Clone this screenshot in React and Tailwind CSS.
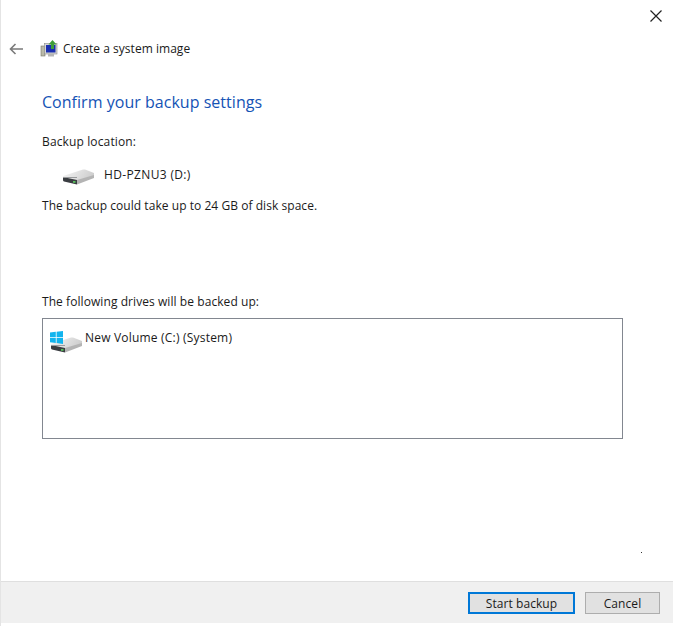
const font = { fontFamily: '"Open Sans", "Noto Sans", sans-serif', letterSpacing: "0.07px" };

function Drive({ className = "", id }) {
  return (
    <svg width="33" height="16" viewBox="0 0 33 16" className={className}>
      <defs>
        <linearGradient id={id} x1="0" y1="0" x2="1" y2="0.3">
          <stop offset="0" stopColor="#f6f6f6" />
          <stop offset="1" stopColor="#cfcfcf" />
        </linearGradient>
      </defs>
      <path d="M1 7 L21 0.5 Q22 0.3 23 0.5 L32 4 L32 8 L15 12 L1 9 Z" fill={`url(#${id})`} />
      <path d="M15 11 L32 6 L32 9 L15 15.5 Z" fill="#b4b4b4" />
      <path d="M1 8 L15 11 L15 15.5 L2 12.5 Q1 12.2 1 11 Z" fill="#3a3d41" />
      <rect x="1" y="8" width="14" height="1" fill="#9a9c9e" />
      <rect x="11" y="12" width="2.5" height="1.8" fill="#58c05c" />
    </svg>
  );
}

function SystemImageIcon() {
  return (
    <svg width="18" height="18" viewBox="0 0 18 18">
      <rect x="1" y="6" width="4" height="10" fill="#b9b9a8" stroke="#77776a" strokeWidth="0.6" />
      <rect x="4.5" y="3.5" width="12.5" height="10.5" fill="#d5d5d5" stroke="#8a8a8a" strokeWidth="0.6" />
      <rect x="6" y="5" width="9.5" height="7.5" fill="#1a2fb0" />
      <rect x="8" y="14" width="6" height="2.5" fill="#b5b5b5" />
      <path d="M11 9 V4.5 H8.5 L12.5 0 L16.5 4.5 H14 V9 Z" fill="#3f9e3a" />
    </svg>
  );
}

function WinLogo({ className = "" }) {
  return (
    <svg width="13" height="13" viewBox="0 0 13 13" className={className}>
      <path d="M0 1.6 L5.8 0.8 V6 H0 Z M6.6 0.7 L13 0 V6 H6.6 Z M0 6.8 H5.8 V12 L0 11.2 Z M6.6 6.8 H13 V13 L6.6 12.1 Z" fill="#12b4ee" />
    </svg>
  );
}

export default function App() {
  return (
    <div style={font} className="relative w-[673px] h-[626px] bg-white flex flex-col text-[12px] leading-[16px] text-[#1a1a1a] border-l border-[#e4e4e4] overflow-hidden">
      <div className="flex justify-end h-[33px] pr-[11px] pt-[10px] shrink-0">
        <svg width="12" height="12" viewBox="0 0 12 12" stroke="#222" strokeWidth="1.2">
          <path d="M0.5 0.5 L11.5 11.5 M11.5 0.5 L0.5 11.5" />
        </svg>
      </div>

      <div className="flex items-center h-[32px] shrink-0">
        <svg width="14" height="12" viewBox="0 0 14 12" className="ml-[8px]" fill="none" stroke="#7a7a7a" strokeWidth="1.6">
          <path d="M14 6 H1.5 M6.5 1 L1.5 6 L6.5 11" />
        </svg>
        <span className="ml-[17px] flex mt-[-1px]"><SystemImageIcon /></span>
        <span className="ml-[5px] tracking-[0.03px]">Create a system image</span>
      </div>

      <main className="flex-1 flex flex-col pl-[41px] pr-[50px]">
        <h1 className="mt-[25px] text-[16px] leading-[24px] font-normal tracking-[0.03px] text-[#1553b5]">Confirm your backup settings</h1>
        <p className="mt-[20px] tracking-[0.13px]">Backup location:</p>
        <div className="mt-[16px] flex items-center h-[18px]">
          <Drive id="d1" className="ml-[20px] mt-[4px]" />
          <span className="ml-[9px] tracking-[0.35px]">HD-PZNU3 (D:)</span>
        </div>
        <p className="mt-[14px] tracking-[0.05px]">The backup could take up to 24 GB of disk space.</p>
        <p className="mt-[80px]">The following drives will be backed up:</p>
        <div className="mt-[8px] h-[121px] border border-[#828790]">
          <div className="flex items-start pl-[7px] pt-[11px]">
            <span className="relative flex mt-[7px]">
              <Drive id="d2" />
              <WinLogo className="absolute left-0 top-[-6px]" />
            </span>
            <span className="ml-[2px] tracking-[0.2px]">New Volume (C:) (System)</span>
          </div>
        </div>
      </main>

      <footer className="h-[42px] mb-[3px] bg-[#f0f0f0] border-t border-[#dfdfdf] flex items-center justify-end gap-[10px] pr-[13px] shrink-0">
        <button className="w-[107px] h-[22px] pt-[2px] bg-[#e1e1e1] border-2 border-[#0078d7]">Start backup</button>
        <button className="w-[75px] h-[22px] pt-[2px] bg-[#e1e1e1] border border-[#adadad]">Cancel</button>
      </footer>

      <span className="absolute left-[640px] top-[552px] w-px h-px bg-[#333]" />
    </div>
  );
}
